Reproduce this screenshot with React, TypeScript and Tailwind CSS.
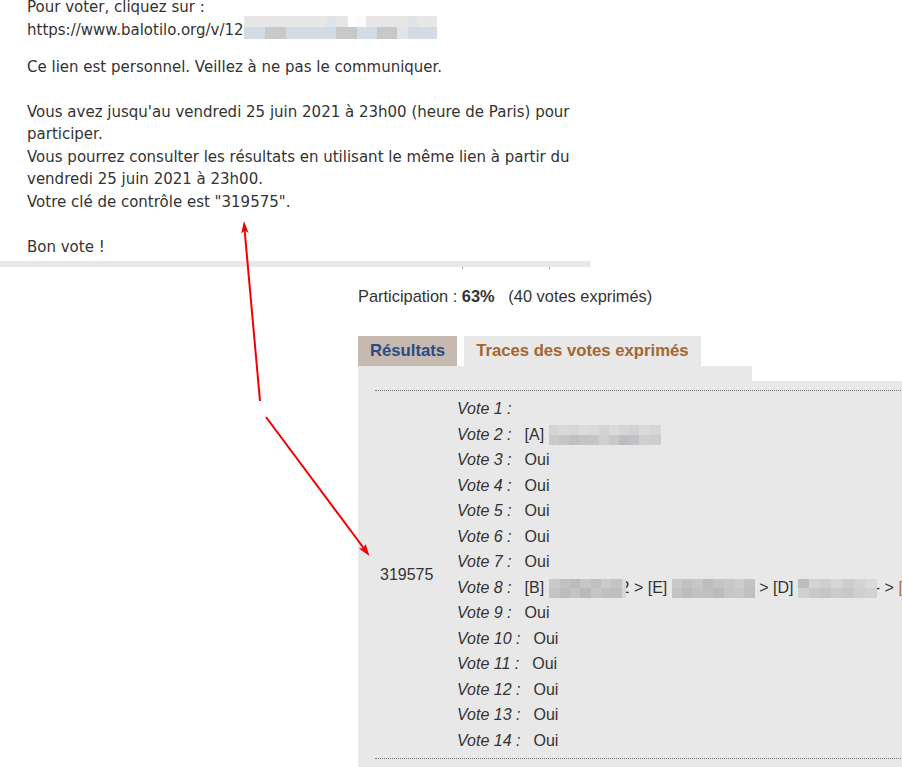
import React from "react";

type Cell = [number, string];

function Pix({ rows, h }: { rows: Cell[][]; h: number }) {
  return (
    <span className="relative z-[1] inline-flex flex-col align-middle">
      {rows.map((r, i) => (
        <span key={i} className="flex">
          {r.map(([w, c], j) => (
            <span key={j} style={{ width: w, height: h, background: c }} className="block" />
          ))}
        </span>
      ))}
    </span>
  );
}

const urlBlur: Cell[][] = [
  [
    [82, "#e7e7e7"],
    [10, "#dde3e6"],
    [12, "#e7e7e7"],
    [8, "#ffffff"],
    [10, "#fbfbfb"],
    [42, "#e7e7e7"],
    [10, "#dde4e6"],
    [19, "#e7e7e7"],
  ],
  [
    [21, "#d3dbe4"],
    [21, "#c9c9c9"],
    [50, "#d3dbe4"],
    [21, "#c8c8c8"],
    [20, "#d3dbe4"],
    [20, "#c8c8c8"],
    [11, "#dfe4e6"],
    [29, "#d3dbe4"],
  ],
];

const v2Blur: Cell[][] = [
  [
    [10, "#d4d4d4"],
    [10, "#d9d9d9"],
    [10, "#d6d6d6"],
    [10, "#dcdcdc"],
    [10, "#d9d9d9"],
    [10, "#d3d3d3"],
    [10, "#dbdbdb"],
    [10, "#d6d6d6"],
    [10, "#d2d2d2"],
    [11, "#dadada"],
    [11, "#d7d7d7"],
  ],
  [
    [10, "#cacaca"],
    [10, "#c5c5c5"],
    [10, "#c0c0c0"],
    [10, "#c4c4c4"],
    [10, "#c6c6c6"],
    [10, "#cfcfcf"],
    [10, "#c9c9c9"],
    [10, "#bebebe"],
    [10, "#c1c1c8"],
    [11, "#cfcfcf"],
    [11, "#cdcdcd"],
  ],
];

const b8a: Cell[][] = [
  [
    [11, "#cacaca"],
    [10, "#c2c2c2"],
    [10, "#bcbcbc"],
    [11, "#c6c6c6"],
    [10, "#c0c0c0"],
    [10, "#cbcbcb"],
    [11, "#c4c4c4"],
    [4, "#dcdcdc"],
  ],
  [
    [11, "#c4c4c4"],
    [10, "#bdbdbd"],
    [10, "#c4c4c4"],
    [11, "#bababa"],
    [10, "#c6c6c6"],
    [10, "#c0c0c0"],
    [11, "#bfbfbf"],
    [4, "#d6d6d6"],
  ],
];

const b8b: Cell[][] = [
  [
    [10, "#c9c9c9"],
    [10, "#c2c2c2"],
    [11, "#c7c7c7"],
    [10, "#bdbdbd"],
    [11, "#c4c4c4"],
    [10, "#c9c9c9"],
    [10, "#cdcdcd"],
    [11, "#c3c3c3"],
  ],
  [
    [10, "#c4c4c4"],
    [10, "#bcbcbc"],
    [11, "#c2c2c2"],
    [10, "#c0c0c0"],
    [11, "#bbbbbb"],
    [10, "#c6c6c6"],
    [10, "#c8c8c8"],
    [11, "#c0c0c0"],
  ],
];

const b8c: Cell[][] = [
  [
    [11, "#bdbdbd"],
    [11, "#d4d4d4"],
    [11, "#cfcfcf"],
    [12, "#d6d6d6"],
    [11, "#cdcdcd"],
    [11, "#d3d3d3"],
    [12, "#dadada"],
  ],
  [
    [11, "#d0d0d0"],
    [11, "#c9c9c9"],
    [11, "#c6c6c6"],
    [12, "#cbcbcb"],
    [11, "#c8c8c8"],
    [11, "#cfcfcf"],
    [12, "#d2d2d2"],
  ],
];

function Vote({ n, children }: { n: number; children?: React.ReactNode }) {
  return (
    <div className="whitespace-nowrap">
      <span className="italic">Vote {n} :</span>
      <span className="inline-block w-[13px]" />
      {children}
    </div>
  );
}

export default function App() {
  return (
    <div className="relative w-[902px] h-[767px] overflow-hidden bg-white">
      {/* Email */}
      <div
        className="pl-[27px] mt-[-4px] text-[15px] leading-[22.5px] text-[#333333]"
        style={{ fontFamily: '"DejaVu Sans", sans-serif' }}
      >
        <div>Pour voter, cliquez sur :</div>
        <div className="flex items-start h-[22.5px]">
          <span>https://www.balotilo.org/v/12</span>
          <span className="mt-[-3px] flex">
            <Pix rows={urlBlur} h={11.5} />
          </span>
        </div>
        <div className="mt-[14.5px]">Ce lien est personnel. Veillez à ne pas le communiquer.</div>
        <div className="mt-[22.5px]">Vous avez jusqu'au vendredi 25 juin 2021 à 23h00 (heure de Paris) pour</div>
        <div>participer.</div>
        <div>Vous pourrez consulter les résultats en utilisant le même lien à partir du</div>
        <div>vendredi 25 juin 2021 à 23h00.</div>
        <div>Votre clé de contrôle est "319575".</div>
        <div className="mt-[22.5px]">Bon vote !</div>
      </div>

      {/* Strip */}
      <div className="mt-[3px] w-[590px] h-[6px] bg-[#e8e8e8]" />
      <div className="flex h-[2px]">
        <div className="ml-[462px] w-[1px] h-[2px] bg-[#999]" />
        <div className="ml-[86px] w-[1px] h-[2px] bg-[#999]" />
      </div>

      {/* Results */}
      <div
        className="pl-[358px] pt-[18px] text-[16px] text-[#333333]"
        style={{ fontFamily: '"Liberation Sans", Arial, sans-serif' }}
      >
        <div className="leading-[18px] text-[16.4px]">
          Participation : <b>63%</b>
          {"\u00a0\u00a0 "}(40 votes exprimés)
        </div>

        <div className="mt-[31px] flex gap-[7px] text-[16.7px]">
          <div className="h-[30px] px-[12px] flex items-center bg-[#c6b9b0] font-bold text-[#2c4a86]">
            Résultats
          </div>
          <div className="h-[30px] px-[12px] flex items-center bg-[#e8e8e8] font-bold text-[#a5652f]">
            Traces des votes exprimés
          </div>
        </div>

        <div className="w-[394px] bg-[#e8e8e8] pt-[15px] pl-[17px]">
          <div className="w-[700px] bg-[#e8e8e8] pt-[9px]">
            <div className="flex border-y border-dotted border-[#777777]">
              <div className="w-[82px] pl-[5px] flex items-center">319575</div>
              <div className="pt-[5px] pb-[5px] leading-[25.5px]">
                <Vote n={1} />
                <Vote n={2}>
                  [A] <Pix rows={v2Blur} h={10} />
                </Vote>
                <Vote n={3}>Oui</Vote>
                <Vote n={4}>Oui</Vote>
                <Vote n={5}>Oui</Vote>
                <Vote n={6}>Oui</Vote>
                <Vote n={7}>Oui</Vote>
                <Vote n={8}>
                  [B] <Pix rows={b8a} h={9.5} />
                  <span className="ml-[-5px]">2 &gt; [E] </span>
                  <Pix rows={b8b} h={9.5} /> &gt; [D] <Pix rows={b8c} h={9.5} />
                  <span className="ml-[-2px]">- &gt; </span>
                  <span className="text-[#b0702f]">[</span>
                </Vote>
                <Vote n={9}>Oui</Vote>
                <Vote n={10}>Oui</Vote>
                <Vote n={11}>Oui</Vote>
                <Vote n={12}>Oui</Vote>
                <Vote n={13}>Oui</Vote>
                <Vote n={14}>Oui</Vote>
              </div>
            </div>
            <div className="h-[40px]" />
          </div>
        </div>
      </div>

      {/* Arrows overlay */}
      <svg
        className="absolute inset-0 pointer-events-none z-[2]"
        width="902"
        height="767"
        viewBox="0 0 902 767"
      >
        <line x1="260" y1="401" x2="244.6" y2="230" stroke="#f00000" strokeWidth="2" />
        <polygon points="244,221 248.6,233 244.8,230.5 241.2,233.4" fill="#f00000" />
        <line x1="266" y1="417" x2="364" y2="548.5" stroke="#f00000" strokeWidth="2" />
        <polygon points="369.5,556 358.8,548.6 363.2,548.2 365.6,544" fill="#f00000" />
      </svg>
    </div>
  );
}
